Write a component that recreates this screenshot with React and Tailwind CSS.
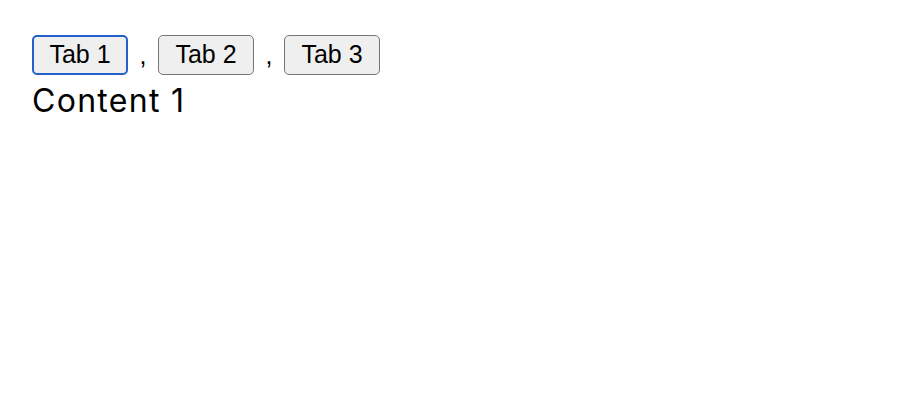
import React, { useState } from "react";

export default function App() {
  const [active, setActive] = useState(0);
  const tabs = ["Tab 1", "Tab 2", "Tab 3"];
  return (
    <div className="min-h-[410px] w-full bg-white pl-[32px] pt-[35px]">
      <div className="flex items-center">
        {tabs.map((t, i) => (
          <React.Fragment key={t}>
            {i > 0 && (
              <span className="w-[30px] text-center font-['Liberation_Sans',sans-serif] text-[25px] leading-[40px] text-black">
                ,
              </span>
            )}
            <button
              onClick={() => setActive(i)}
              className={
                "flex h-[40px] w-[96px] items-center justify-center rounded-[5px] bg-[#efefef] font-['Liberation_Sans',sans-serif] text-[25px] text-black " +
                (i === active
                  ? "border-[2.5px] border-[#2360cc]"
                  : "border border-[#767676]")
              }
            >
              {t}
            </button>
          </React.Fragment>
        ))}
      </div>
      <div className="mt-[7px] font-['Inter',sans-serif] text-[32px] leading-[38px] tracking-[1.3px] text-black">
        {["Content 1", "Content 2", "Content 3"][active]}
      </div>
    </div>
  );
}
